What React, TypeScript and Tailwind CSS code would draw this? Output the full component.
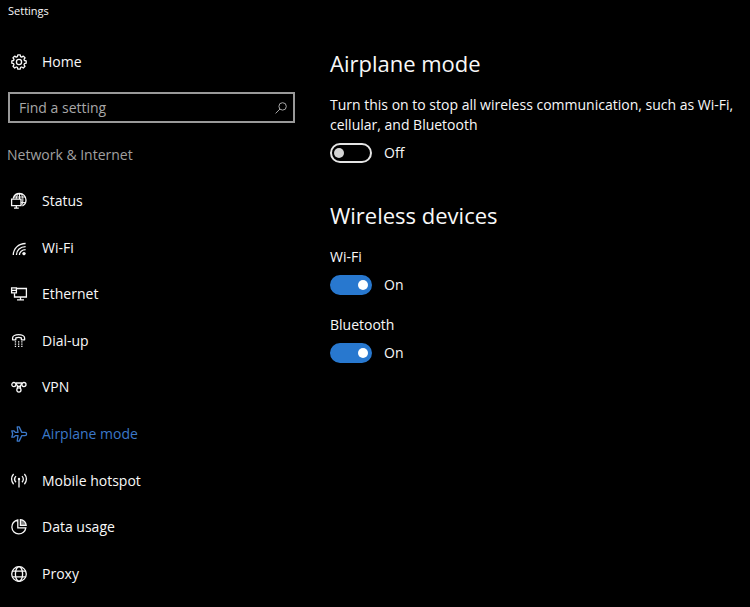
import { useState } from "react";
import type { ReactNode } from "react";

function Icon({ children }: { children: ReactNode }) {
  return (
    <svg
      viewBox="0 0 16 16"
      className="w-4 h-4 shrink-0 overflow-visible"
      fill="none"
      stroke="currentColor"
      strokeWidth="1.3"
      aria-hidden="true"
    >
      {children}
    </svg>
  );
}

const gearIcon = (
  <Icon>
    <path
      strokeLinejoin="round"
      d="M6.8 .8 L9.2 .8 L9.6 2.6 L10.7 3.1 L12.3 2.1 L14 3.8 L13 5.4 L13.4 6.5 L15.2 6.9 L15.2 9.2 L13.4 9.6 L13 10.7 L14 12.3 L12.3 14 L10.7 13 L9.6 13.4 L9.2 15.2 L6.8 15.2 L6.4 13.4 L5.3 13 L3.7 14 L2 12.3 L3 10.7 L2.6 9.6 L.8 9.2 L.8 6.9 L2.6 6.5 L3 5.4 L2 3.8 L3.7 2.1 L5.3 3.1 L6.4 2.6 Z"
    />
    <circle cx="8" cy="8" r="2.6" />
  </Icon>
);

const items: { label: string; icon: ReactNode; active?: boolean }[] = [
  {
    label: "Status",
    icon: (
      <Icon>
        <path d="M2.2 5.5 C3 2.5 5.6 .5 8.5 .5 C12.2 .5 15 3.4 15 7 C15 9.6 13.6 11.8 11.4 12.8" />
        <path d="M5.2 5.8 C5.5 2.8 6.8 .5 8.5 .5 C10.4 .5 11.9 3.4 11.9 7 C11.9 9 11.5 10.8 10.8 12 M8.5 .5 V6 M2.8 4 H14.2 M10 9.6 H14.4" strokeWidth="1" />
        <path d="M.6 6.2 H10 V12.6 H.6 Z M5.3 12.6 V15 M3 15.2 H7.8" />
      </Icon>
    ),
  },
  {
    label: "Wi-Fi",
    icon: (
      <Icon>
        <path d="M2.3 15 C2.3 8.6 7.4 3.5 14.6 3.5 M5.4 15 C5.4 10.3 9.4 6.6 14.6 6.6 M8.4 15 C8.4 12 11 9.7 14.6 9.7" />
        <circle cx="13" cy="13.6" r="1.7" fill="currentColor" stroke="none" />
      </Icon>
    ),
  },
  {
    label: "Ethernet",
    icon: (
      <Icon>
        <path d="M6 2.5 H15.4 V11 H3.5 V7.2 M9.5 11 V13.5 M6 13.8 H13" />
        <path d="M.6 1.9 H5.4 V6.8 H.6 Z M.6 4.3 H5.4" />
      </Icon>
    ),
  },
  {
    label: "Dial-up",
    icon: (
      <Icon>
        <path
          strokeLinejoin="round"
          d="M1.6 6.8 V5 C1.6 3 4.4 1.6 7.6 1.6 S13.6 3 13.6 5 V6.8 H10.4 V4.9 C8.6 4.2 6.6 4.2 4.8 4.9 V6.8 Z"
        />
        <path
          strokeWidth="1.2"
          strokeDasharray="1.3 1.9"
          d="M3.8 8.8 H11.5 M3.8 11.1 H11.5 M3.8 13.4 H11.5"
        />
      </Icon>
    ),
  },
  {
    label: "VPN",
    icon: (
      <Icon>
        <circle cx="2.9" cy="5.6" r="2.1" />
        <circle cx="12.9" cy="5.6" r="2.1" />
        <circle cx="7.9" cy="11" r="2.1" />
        <path d="M4.4 4.1 L6.4 6.6 C7 7.8 8.8 7.8 9.4 6.6 L11.4 4.1 M4.6 4 H11.2 M6.4 6.6 V9.5 M9.4 6.6 V9.5" />
      </Icon>
    ),
  },
  {
    label: "Airplane mode",
    active: true,
    icon: (
      <Icon>
        <path
          strokeLinejoin="round"
          d="M.8 4.8 H2.8 L4.4 6.4 H7 L6.2 .9 H8.2 L10.8 6.4 H14 C15.1 6.4 15.6 7.1 15.6 8 S15.1 9.6 14 9.6 H10.8 L8.2 15.1 H6.2 L7 9.6 H4.4 L2.8 11.2 H.8 L1.7 8 Z"
        />
      </Icon>
    ),
  },
  {
    label: "Mobile hotspot",
    icon: (
      <Icon>
        <path d="M2.6 1 C-.1 3.9 -.1 8.3 2.6 11.2 M5 3.1 C3.2 4.9 3.2 7.4 5 9.2 M13.4 1 C16.1 3.9 16.1 8.3 13.4 11.2 M11 3.1 C12.8 4.9 12.8 7.4 11 9.2 M8 6.4 V14.6" />
        <circle cx="8" cy="6" r="1.2" fill="currentColor" stroke="none" />
      </Icon>
    ),
  },
  {
    label: "Data usage",
    icon: (
      <Icon>
        <path d="M6.8 1 A7 7 0 1 0 14.8 8.8 H6.8 Z" />
        <path d="M9.4 .6 A6 6 0 0 1 15.2 6.4 H9.4 Z" fill="currentColor" fillOpacity="0.5" />
      </Icon>
    ),
  },
  {
    label: "Proxy",
    icon: (
      <Icon>
        <circle cx="8" cy="8" r="7.3" />
        <ellipse cx="8" cy="8" rx="3.6" ry="7.3" />
        <path d="M1.4 5.2 H14.6 M1.4 10.8 H14.6" />
      </Icon>
    ),
  },
];

function Toggle({ label, initial }: { label: string; initial: boolean }) {
  const [on, setOn] = useState(initial);
  return (
    <label className="flex items-center gap-3 w-fit h-5">
      <input
        type="checkbox"
        role="switch"
        aria-label={label}
        checked={on}
        onChange={(e) => setOn(e.target.checked)}
        className="appearance-none flex items-center w-[42px] h-5 px-0.5 rounded-full border-2 border-[#e4e4e4] before:w-[10px] before:h-[10px] before:rounded-full before:bg-[#d4d4d4] checked:justify-end checked:border-[#2878cf] checked:bg-[#2878cf] checked:before:bg-white"
      />
      <span>{on ? "On" : "Off"}</span>
    </label>
  );
}

export default function App() {
  return (
    <div className="min-h-screen bg-black text-[#f8f8f8] text-[14px] leading-5 font-['Open_Sans','Noto_Sans',sans-serif]">
      <header className="px-2 pt-[3px] text-[11px] leading-4">Settings</header>
      <div className="flex">
        <aside className="w-[295px] shrink-0 pt-[31px]">
          <a href="#home" className="flex items-center gap-[15px] h-6 pl-[11px]">
            {gearIcon}
            <span>Home</span>
          </a>
          <div className="mt-[18px] ml-2 flex items-center h-[31px] border-2 border-[#999999] pl-[9px] pr-1.5">
            <input
              type="text"
              aria-label="Find a setting"
              placeholder="Find a setting"
              className="flex-1 min-w-0 bg-transparent outline-none placeholder:text-[#a8a8a8]"
            />
            <button type="button" aria-label="Search" className="w-3 h-3 text-[#a8a8a8]">
              <svg viewBox="0 0 12 12" className="w-3 h-3" fill="none" stroke="currentColor" aria-hidden="true">
                <circle cx="7.6" cy="4.4" r="3.7" />
                <path d="M5 7 L.6 11.4" />
              </svg>
            </button>
          </div>
          <h2 className="mt-[22px] pl-[7px] text-[#a0a0a0]">Network &amp; Internet</h2>
          <nav className="mt-[13px]">
            <ul className="grid auto-rows-fr min-h-[419px]">
              {items.map((item) => (
                <li key={item.label} className="flex">
                  <a
                    href="#"
                    aria-current={item.active ? "page" : undefined}
                    className={`flex flex-1 items-center gap-[15px] pl-[11px] ${item.active ? "text-[#3b78c8]" : ""}`}
                  >
                    {item.icon}
                    <span>{item.label}</span>
                  </a>
                </li>
              ))}
            </ul>
          </nav>
        </aside>
        <main className="flex-1 min-w-0 pl-[35px] pr-4 pt-7">
          <h1 className="text-[22px] leading-8">Airplane mode</h1>
          <p className="mt-4">
            Turn this on to stop all wireless communication, such as Wi-Fi, cellular, and Bluetooth
          </p>
          <div className="mt-2">
            <Toggle label="Airplane mode" initial={false} />
          </div>
          <h2 className="mt-9 text-[22px] leading-8">Wireless devices</h2>
          <p className="mt-4">Wi-Fi</p>
          <div className="mt-2">
            <Toggle label="Wi-Fi" initial={true} />
          </div>
          <p className="mt-5">Bluetooth</p>
          <div className="mt-2">
            <Toggle label="Bluetooth" initial={true} />
          </div>
        </main>
      </div>
    </div>
  );
}
